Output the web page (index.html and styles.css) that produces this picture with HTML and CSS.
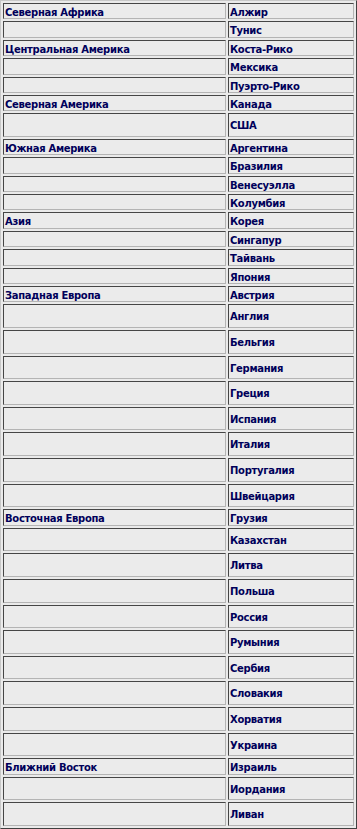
FILE: index.html
```html
<!DOCTYPE html>
<html lang="ru">
<head>
<meta charset="utf-8">
<title>Страны по регионам</title>
<link rel="stylesheet" href="styles.css">
</head>
<body>
<table class="regions">
<tbody>
<tr><td class="region">Северная Африка</td><td class="country">Алжир</td></tr>
<tr><td class="region"></td><td class="country">Тунис</td></tr>
<tr><td class="region">Центральная Америка</td><td class="country">Коста-Рико</td></tr>
<tr><td class="region"></td><td class="country">Мексика</td></tr>
<tr><td class="region"></td><td class="country">Пуэрто-Рико</td></tr>
<tr><td class="region">Северная Америка</td><td class="country">Канада</td></tr>
<tr class="tall"><td class="region"></td><td class="country">США</td></tr>
<tr><td class="region">Южная Америка</td><td class="country">Аргентина</td></tr>
<tr><td class="region"></td><td class="country">Бразилия</td></tr>
<tr><td class="region"></td><td class="country">Венесуэлла</td></tr>
<tr><td class="region"></td><td class="country">Колумбия</td></tr>
<tr><td class="region">Азия</td><td class="country">Корея</td></tr>
<tr><td class="region"></td><td class="country">Сингапур</td></tr>
<tr><td class="region"></td><td class="country">Тайвань</td></tr>
<tr><td class="region"></td><td class="country">Япония</td></tr>
<tr><td class="region">Западная Европа</td><td class="country">Австрия</td></tr>
<tr class="tall"><td class="region"></td><td class="country">Англия</td></tr>
<tr class="tall"><td class="region"></td><td class="country">Бельгия</td></tr>
<tr class="tall"><td class="region"></td><td class="country">Германия</td></tr>
<tr class="tall"><td class="region"></td><td class="country">Греция</td></tr>
<tr class="tall"><td class="region"></td><td class="country">Испания</td></tr>
<tr class="tall"><td class="region"></td><td class="country">Италия</td></tr>
<tr class="tall"><td class="region"></td><td class="country">Португалия</td></tr>
<tr class="tall"><td class="region"></td><td class="country">Швейцария</td></tr>
<tr><td class="region">Восточная Европа</td><td class="country">Грузия</td></tr>
<tr class="tall"><td class="region"></td><td class="country">Казахстан</td></tr>
<tr class="tall"><td class="region"></td><td class="country">Литва</td></tr>
<tr class="tall"><td class="region"></td><td class="country">Польша</td></tr>
<tr class="tall"><td class="region"></td><td class="country">Россия</td></tr>
<tr class="tall"><td class="region"></td><td class="country">Румыния</td></tr>
<tr class="tall"><td class="region"></td><td class="country">Сербия</td></tr>
<tr class="tall"><td class="region"></td><td class="country">Словакия</td></tr>
<tr class="tall"><td class="region"></td><td class="country">Хорватия</td></tr>
<tr class="tall"><td class="region"></td><td class="country">Украина</td></tr>
<tr><td class="region">Ближний Восток</td><td class="country">Израиль</td></tr>
<tr class="tall"><td class="region"></td><td class="country">Иордания</td></tr>
<tr class="tall"><td class="region"></td><td class="country">Ливан</td></tr>
</tbody>
</table>
</body>
</html>
```

FILE: styles.css
```css
html, body {
  margin: 0;
  padding: 0;
  background: #eaeaea;
}

.regions {
  width: 357px;
  border-collapse: separate;
  border-spacing: 2px;
  border: 1px solid;
  border-color: #c8c8c8 #404040 #404040 #c8c8c8;
  background: #eaeaea;
  font-family: "DejaVu Sans", Verdana, sans-serif;
  font-size: 10px;
  letter-spacing: -0.3px;
  font-weight: bold;
  color: #00005a;
}

.regions td {
  border: 1px solid;
  border-color: #454545 #b4b4b4 #b4b4b4 #454545;
  padding: 3px 1px 0;
  line-height: 11.375px;
  vertical-align: middle;
  white-space: nowrap;
  background: #ebebeb;
}

.regions .region {
  width: 219px;
}

.regions .country {
  width: auto;
}

.regions .tall td {
  padding-top: 3px;
  line-height: 18.63px;
}
```
